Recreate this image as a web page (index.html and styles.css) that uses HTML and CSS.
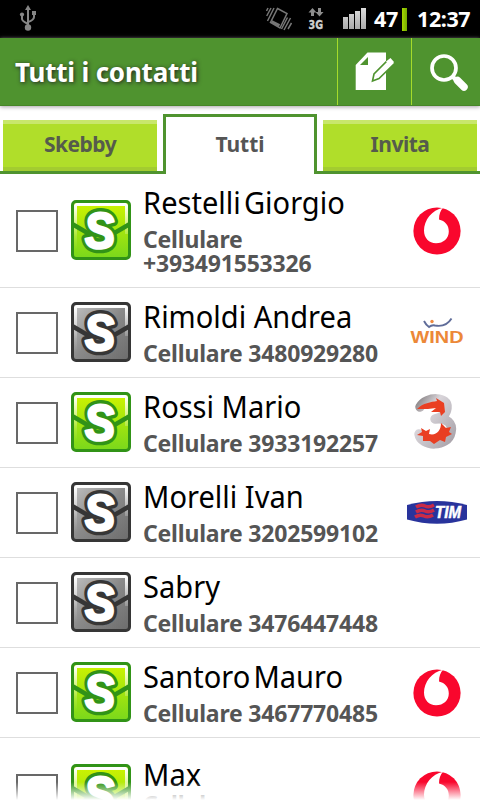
FILE: index.html
```html
<!DOCTYPE html>
<html lang="it">
<head>
<meta charset="utf-8">
<title>Tutti i contatti</title>
<link rel="stylesheet" href="styles.css">
</head>
<body>
<svg class="defs" width="0" height="0">
  <defs>
    <linearGradient id="lime" x1="0" y1="0" x2="0" y2="1"><stop offset="0" stop-color="#d0f400"/><stop offset="1" stop-color="#79d81c"/></linearGradient>
    <linearGradient id="grey" x1="0" y1="0" x2="1" y2="1"><stop offset="0" stop-color="#c4c4c4"/><stop offset=".5" stop-color="#898989"/><stop offset="1" stop-color="#6c6c6c"/></linearGradient>
    <linearGradient id="shine" x1="0" y1="0" x2="0" y2="1"><stop offset="0" stop-color="#fff"/><stop offset=".7" stop-color="#fff" stop-opacity=".15"/><stop offset="1" stop-color="#fff" stop-opacity="0"/></linearGradient>
    <linearGradient id="silver" x1="0" y1="0" x2="1" y2="1"><stop offset="0" stop-color="#8c8789"/><stop offset=".3" stop-color="#d9d5da"/><stop offset=".6" stop-color="#c4c0c6"/><stop offset="1" stop-color="#aaa4ab"/></linearGradient>
    <linearGradient id="bar" x1="0" y1="0" x2="0" y2="1"><stop offset="0" stop-color="#ddd"/><stop offset="1" stop-color="#aaa"/></linearGradient>
    <symbol id="skebby" viewBox="0 0 60 60">
      <rect x="1.500" y="1.500" width="57" height="57" rx="3.500" class="sk-face"/>
      <path d="M4.500 50V6Q4.500 4.500 6 4.500H54Q55.500 4.500 55.500 6V34" fill="none" stroke="url(#shine)" stroke-width="3"/>
      <path d="M2 24.500L20 35H40L58 24.500" fill="none" class="sk-line" stroke-width="4.500"/>
      <g transform="translate(29.800 48) skewX(4) scale(.96 1.070)">
        <text text-anchor="middle" class="sk-letter sk-outline">S</text>
        <text text-anchor="middle" class="sk-letter sk-fill">S</text>
      </g>
      <rect x="1.500" y="1.500" width="57" height="57" rx="3.500" fill="none" class="sk-line" stroke-width="3"/>
    </symbol>
    <symbol id="vodafone" viewBox="0 0 60 60">
      <circle cx="30" cy="30" r="23.600" fill="#f9072d"/>
      <path d="M36 6.700C25 9 17 19 17 29.500C17 37 22 42.300 29 42.300C36.500 42.300 41.800 37.300 41.800 30.500C41.800 24 38 20 32 18.500C32 13 33.500 9.500 36 6.700Z" fill="#fff"/>
    </symbol>
    <symbol id="wind" viewBox="0 0 60 60">
      <path d="M17 18Q19 22 22 24Q25 21.500 28 22.500Q39 24.500 44.500 15.500" fill="none" stroke="#5f6c99" stroke-width="1.900"/>
      <circle cx="25" cy="18.500" r="1.700" fill="#ee8a40"/>
      <text x="3.500" y="39.500" textLength="53" lengthAdjust="spacingAndGlyphs" class="wind-word">WIND</text>
    </symbol>
    <symbol id="three" viewBox="0 0 60 60">
      <path d="M13 14C19 3 42 3 40 15C39 22 34 25 28 26C40 24 46 31 44 39C41 55 14 54 12 41" fill="none" stroke="url(#silver)" stroke-width="9.500" stroke-linecap="round" stroke-linejoin="round"/>
      <path d="M10 16C16 10 24 9 30 8L29 5L37 10L38 19L34 23L33 19L24 19L29 15L21 16Z" fill="#ea3f22"/>
      <path d="M14 35L19 38L23 36L22 41C29 43 34 38 34 30L39 35L44 34L42 39L45 41L39 44L38 49L33 47L27 51L23 48L16 48L16 43L10 42L15 39Z" fill="#e93e22"/>
    </symbol>
    <symbol id="tim" viewBox="0 0 60 60">
      <path d="M0 22Q30 14 60 22V36.500Q30 45 0 36.500Z" fill="#28339c"/>
      <path d="M9 24Q14 21 18 23T27 22M9 29Q14 26 18 28T27 27M8 34Q13 31 17 33T26 32" fill="none" stroke="#c92b48" stroke-width="3.600"/>
      <text x="28" y="34.700" textLength="26" lengthAdjust="spacingAndGlyphs" class="tim-word">TIM</text>
    </symbol>
  </defs>
</svg>

<div class="phone">
  <div class="status">
    <svg class="usb" width="18" height="28" viewBox="0 0 18 28">
      <g fill="none" stroke="#858585" stroke-width="2"><path d="M9 4V23M3 11V14Q3 16 9 19M15 9V12Q15 15 9 17"/></g>
      <g fill="#858585"><path d="M9 0L12 5H6Z"/><circle cx="9" cy="22.500" r="3.200"/><circle cx="3" cy="9.500" r="2.100"/><rect x="13" y="6" width="4" height="4"/></g>
    </svg>
    <div class="status-right">
      <svg class="vibrate" width="26" height="24" viewBox="0 0 26 24">
        <g fill="none" stroke="#777" stroke-width="1.500"><path d="M11.500 1.500L21 6.500L14 21L4.500 15.500Z"/><path d="M5.500 14.500L13.500 18.500" stroke-width="3"/><path d="M8 1L1.500 14M5 1L.7 9M2 1L.5 4M24.500 11L18 23M21.500 10.500L15.500 22M25.500 16L22 22"/></g>
      </svg>
      <svg class="net" width="16" height="22" viewBox="0 0 16 22">
        <path d="M4.500 0L8.500 4.500H6V8H3V4.500H.5ZM11.500 8.500L7.500 4H10V0H13V4H15.500Z" fill="#8d8d8d"/>
        <text x="0.500" y="20.500" textLength="14.500" lengthAdjust="spacingAndGlyphs" class="net-word">3G</text>
      </svg>
      <svg class="signal" width="25" height="22" viewBox="0 0 25 22"><path d="M1 9H6V21H1ZM7 6H12V21H7ZM13 3H18V21H13ZM19 0H24V21H19Z" fill="url(#bar)"/></svg>
      <span class="battery">47</span><span class="level"></span><span class="clock">12:37</span>
    </div>
  </div>

  <header class="bar">
    <h1>Tutti i contatti</h1>
    <div class="action">
      <svg width="40" height="40" viewBox="0 0 40 40">
        <path d="M12.500 .5H31V38H.7V13Z" fill="#fff"/><path d="M13 5V13H5Z" fill="#4f932f"/>
        <path d="M17.500 29L19 22L35 6L40 11L24 26.500Z" fill="#fff" stroke="#4f932f" stroke-width="1.600"/>
        <path d="M31 9.500L35.500 6L39 10L35 13.500Z" fill="#fff"/>
      </svg>
    </div>
    <div class="action search">
      <svg width="40" height="40" viewBox="0 0 40 40"><circle cx="14" cy="14" r="12" fill="none" stroke="#fff" stroke-width="3.700"/><path d="M22.500 22.500L27 27" stroke="#fff" stroke-width="4"/><path d="M27.500 26.500L34 33" stroke="#fff" stroke-width="7.500" stroke-linecap="round"/></svg>
    </div>
  </header>

  <nav class="tabs">
    <div class="tab"><span>Skebby</span></div>
    <div class="tab active"><span>Tutti</span></div>
    <div class="tab"><span>Invita</span></div>
  </nav>

  <main class="list">
    <div class="row tall"><i class="check"></i><svg class="badge green"><use href="#skebby"/></svg><div class="info"><div class="name tight">Restelli Giorgio</div><div class="num">Cellulare +393491553326</div></div><svg class="carrier"><use href="#vodafone"/></svg></div>
    <div class="row"><i class="check"></i><svg class="badge"><use href="#skebby"/></svg><div class="info"><div class="name">Rimoldi Andrea</div><div class="num">Cellulare 3480929280</div></div><svg class="carrier"><use href="#wind"/></svg></div>
    <div class="row"><i class="check"></i><svg class="badge green"><use href="#skebby"/></svg><div class="info"><div class="name">Rossi Mario</div><div class="num">Cellulare 3933192257</div></div><svg class="carrier"><use href="#three"/></svg></div>
    <div class="row"><i class="check"></i><svg class="badge"><use href="#skebby"/></svg><div class="info"><div class="name">Morelli Ivan</div><div class="num">Cellulare 3202599102</div></div><svg class="carrier"><use href="#tim"/></svg></div>
    <div class="row"><i class="check"></i><svg class="badge"><use href="#skebby"/></svg><div class="info"><div class="name">Sabry</div><div class="num">Cellulare 3476447448</div></div></div>
    <div class="row"><i class="check"></i><svg class="badge green"><use href="#skebby"/></svg><div class="info"><div class="name tight">Santoro Mauro</div><div class="num">Cellulare 3467770485</div></div><svg class="carrier"><use href="#vodafone"/></svg></div>
    <div class="row tall last"><i class="check"></i><svg class="badge green"><use href="#skebby"/></svg><div class="info"><div class="name">Max</div><div class="num">Cellulare</div></div><svg class="carrier"><use href="#vodafone"/></svg></div>
  </main>
  <div class="fade"></div>
</div>
</body>
</html>
```
FILE: styles.css
```css
* { box-sizing: border-box; }
body { margin: 0; background: #fff; font-family: "Noto Sans", "Open Sans", sans-serif; overflow: hidden; }
.defs { position: absolute; }
.phone { position: relative; width: 480px; height: 800px; overflow: hidden; display: flex; flex-direction: column; }
svg { display: block; flex: none; }

.status { flex: none; height: 38px; background: #000; color: #fff; display: flex; justify-content: space-between; padding-left: 19px; }
.usb { margin-top: 5px; }
.status-right { display: flex; align-items: center; width: 214px; font-size: 21.5px; font-weight: 700; line-height: 38px; }
.net { margin-left: 16px; margin-top: -1px; overflow: visible; }
.net-word { font: 700 12px "DejaVu Sans", sans-serif; fill: #d0d0d0; stroke: #d0d0d0; stroke-width: .4px; }
.signal { margin-left: 18px; }
.battery { width: 28px; margin-left: 7px; letter-spacing: -.4px; }
.level { width: 5px; height: 23px; background: linear-gradient(90deg, #a6d800, #76ac00); }
.clock { margin-left: 10px; letter-spacing: -.4px; white-space: nowrap; }

.bar { flex: none; height: 68px; background: #4f932f; display: flex; align-items: stretch; position: relative; box-shadow: 0 1px 4px #a9a1a9; border-bottom: 1px solid #478628; }
.bar h1 { margin: 0; padding-left: 15px; flex: 1; font-size: 26px; line-height: 68px; letter-spacing: -.2px; color: #fff; text-shadow: 1px 1px 4px #222; white-space: nowrap; }
.action { width: 74px; border-left: 1px solid #a5db2b; padding: 14px 0 0 17px; }
.search { width: 69px; padding: 16px 0 0 18px; }

.tabs { flex: none; height: 68px; display: grid; grid-template-columns: 163px 154px 163px; align-items: end; }
.tab { height: 54px; border-bottom: 3px solid #4f932f; padding: 0 6px 0 3px; font-size: 21px; font-weight: 700; letter-spacing: -.5px; color: #555b4c; }
.tab span { display: block; height: 51px; line-height: 48px; text-align: center; background: linear-gradient(#c8e76b 0 4px, #b0de2a 4px 47px, #a3cc30 47px); }
.tab:last-child { padding: 0 3px 0 6px; }
.tab.active { height: 60px; padding: 0; border: 3px solid #4f932f; border-bottom: 0; color: #555; letter-spacing: 0; }
.tab.active span { background: #fff; line-height: 54px; }

.list { flex: none; }
.row { height: 90px; display: flex; align-items: center; border-bottom: 1px solid #dedede; padding: 0 13px 0 16px; }
.row.tall { height: 114px; }
.check { width: 42px; height: 42px; border: 2px solid #686868; flex: none; }
.badge { width: 60px; height: 60px; margin-left: 13px; margin-bottom: 2px; --dark: #363636; --face: url(#grey); }
.badge.green { --dark: #319317; --face: url(#lime); }
.sk-face { fill: var(--face); }
.sk-line { stroke: var(--dark); }
.sk-letter { font: italic 700 47px "Liberation Sans", sans-serif; stroke-linejoin: round; }
.sk-outline { fill: var(--dark); stroke: var(--dark); stroke-width: 9px; }
.sk-fill { fill: #fff; stroke: #fff; stroke-width: 2.6px; }
.info { width: 244px; margin-left: 12px; flex: none; align-self: flex-start; padding-top: 12px; }
.name { font-size: 30px; line-height: 34px; white-space: nowrap; color: #000; transform: scaleX(.968); transform-origin: 2px 0; }
.name.tight { word-spacing: -4.500px; }
.num { margin-top: 7px; font-size: 23px; font-weight: 700; line-height: 24px; color: #555; letter-spacing: -.2px; }
.last .info { padding-top: 20px; }
.last .num { margin-top: 0; }
.carrier { width: 60px; height: 60px; margin-left: 20px; }
.wind-word { font: 700 17px "Liberation Sans", sans-serif; fill: #ec8838; }
.tim-word { font: italic 700 16px "Liberation Sans", sans-serif; fill: #fff; stroke: #fff; stroke-width: .5px; }
.fade { position: absolute; left: 0; right: 0; bottom: 0; height: 18px; background: linear-gradient(#fff0, #fff); }
```
